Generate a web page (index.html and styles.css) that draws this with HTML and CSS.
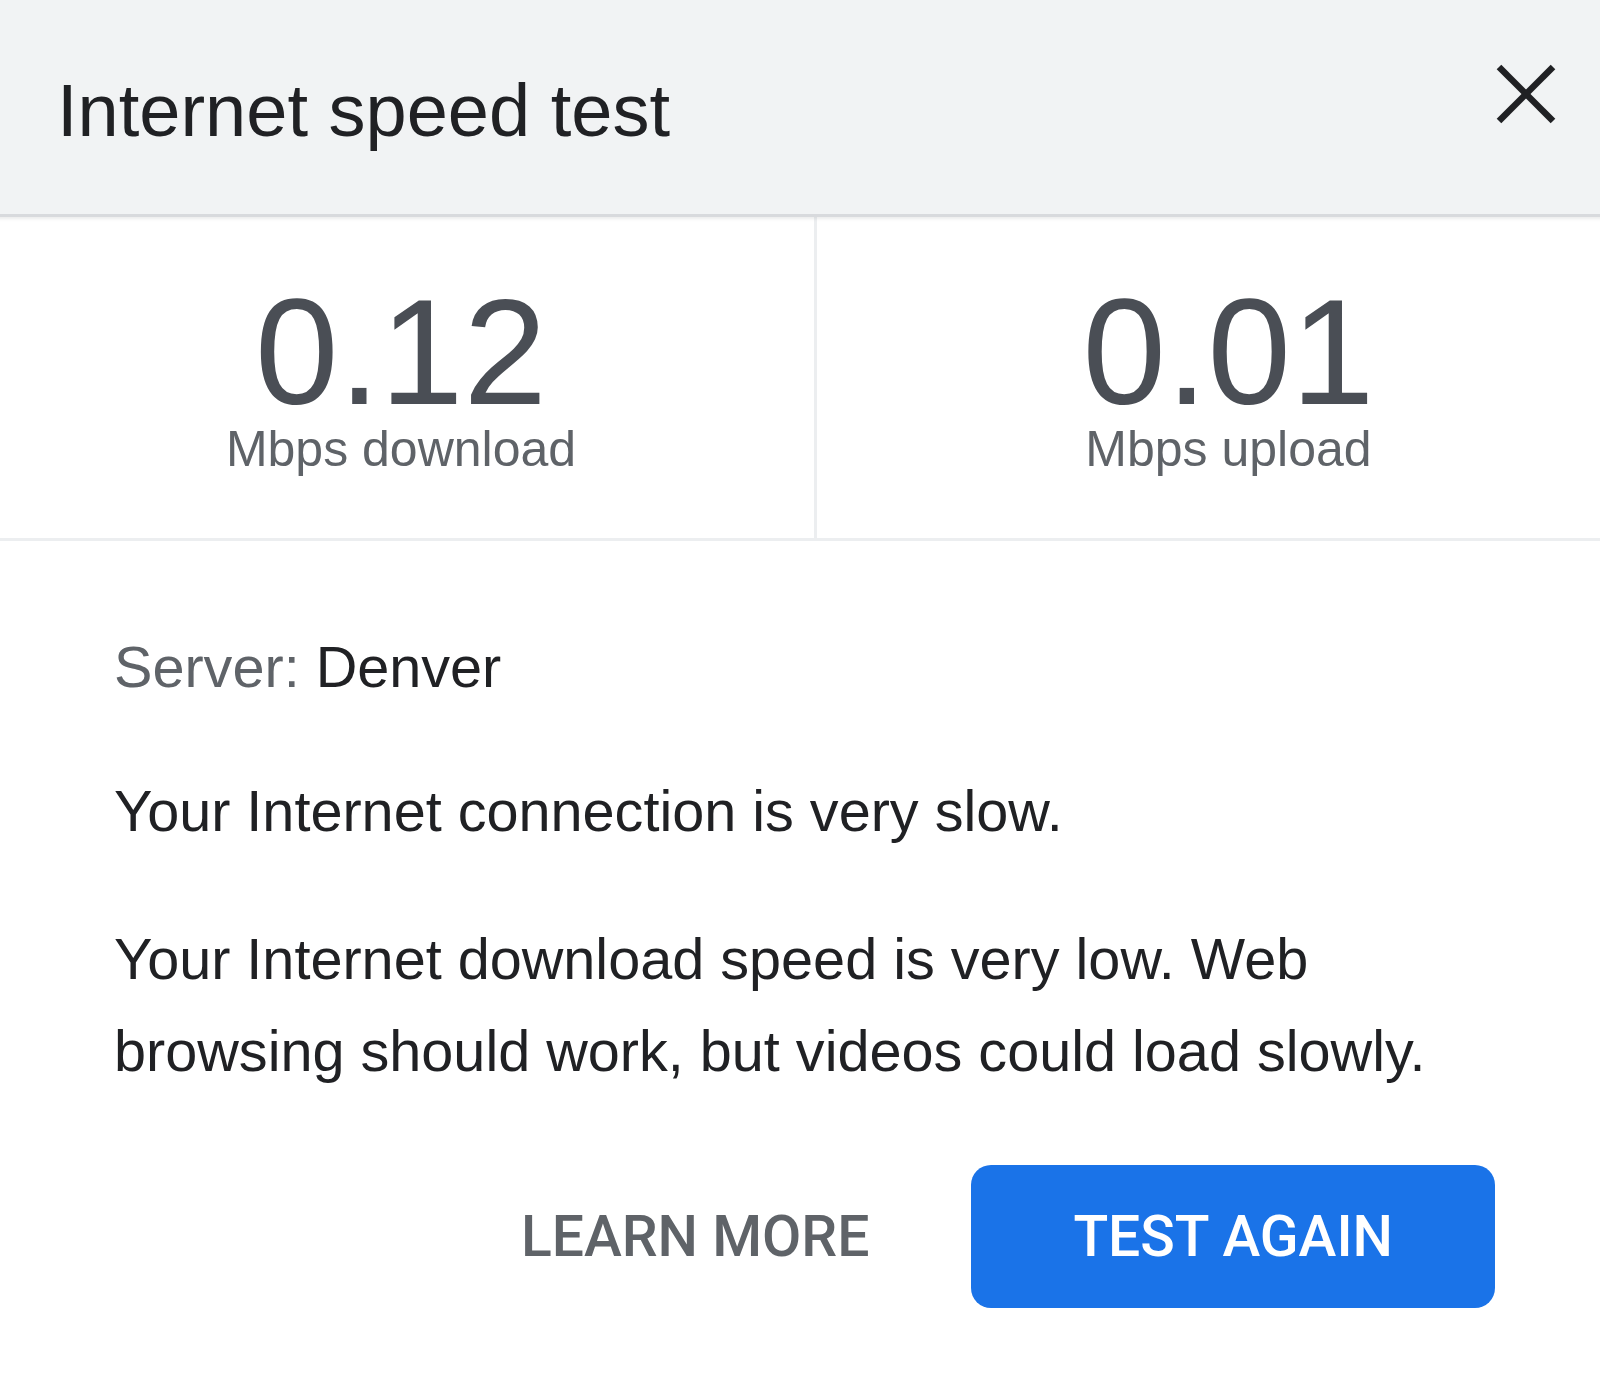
FILE: index.html
```html
<!DOCTYPE html>
<html lang="en">
<head>
<meta charset="utf-8">
<title>Internet speed test</title>
<link rel="stylesheet" href="styles.css">
</head>
<body>
<div class="viewport">
  <div class="dialog">
    <header class="dialog-header">
      <h1 class="dialog-title">Internet speed test</h1>
      <button class="close-btn" aria-label="Close">
        <svg width="64" height="64" viewBox="0 0 64 64" aria-hidden="true">
          <line x1="5" y1="5" x2="59" y2="59" />
          <line x1="59" y1="5" x2="5" y2="59" />
        </svg>
      </button>
    </header>
    <section class="stats">
      <div class="stat">
        <div class="stat-value">0.12</div>
        <div class="stat-label">Mbps download</div>
      </div>
      <div class="stat stat-upload">
        <div class="stat-value">0.01</div>
        <div class="stat-label">Mbps upload</div>
      </div>
    </section>
    <section class="details">
      <p class="server"><span class="server-key">Server:</span> Denver</p>
      <p class="para-first">Your Internet connection is very slow.</p>
      <p class="para-second">Your Internet download speed is very low. Web browsing should work, but videos could load slowly.</p>
    </section>
    <div class="actions">
      <button class="btn btn-text">LEARN MORE</button>
      <button class="btn btn-primary">TEST AGAIN</button>
    </div>
  </div>
</div>
</body>
</html>
```

FILE: styles.css
```css
html, body {
  margin: 0;
  padding: 0;
  background: #ffffff;
}

body {
  font-family: "Liberation Sans", Arial, sans-serif;
  color: #202124;
}

.viewport {
  width: 1600px;
  height: 1393px;
  overflow: hidden;
}

.dialog {
  width: 1652px;
  margin-left: -12px;
}

.dialog-header {
  box-sizing: border-box;
  height: 217px;
  background: #f1f3f4;
  border-bottom: 3px solid #d8dadd;
  box-shadow: 0 2px 3px rgba(60, 64, 67, 0.10);
  display: flex;
  justify-content: space-between;
  align-items: flex-start;
  padding: 62px 82px 0 69px;
  position: relative;
  z-index: 1;
}

.dialog-title {
  margin: 12px 0 0 0;
  font-size: 74px;
  line-height: 74px;
  font-weight: 400;
  color: #202124;
}

.close-btn {
  border: 0;
  background: transparent;
  padding: 0;
  margin: 0;
  width: 64px;
  height: 64px;
  display: block;
}

.close-btn svg {
  display: block;
  stroke: #202124;
  stroke-width: 6.5;
}

.stats {
  display: grid;
  grid-template-columns: 1fr 1fr;
  border-bottom: 3px solid #eceef0;
}

.stat {
  display: flex;
  flex-direction: column;
  align-items: center;
  padding: 62px 0 64px;
}

.stat-upload {
  border-left: 3px solid #eceef0;
}

.stat-value {
  font-size: 150px;
  line-height: 146px;
  color: #4a4e55;
}

.stat-label {
  font-size: 50px;
  line-height: 49px;
  color: #5f6368;
}

.details {
  padding: 80px 126px 0 126px;
  font-size: 57.6px;
  line-height: 92px;
}

.details p {
  margin: 0;
}

.details .server {
  margin-bottom: 52px;
}

.details .para-first {
  margin-bottom: 56px;
}

.server-key {
  color: #5f6368;
}

.actions {
  display: flex;
  justify-content: flex-end;
  padding: 68px 145px 0 0;
}

.btn {
  font-family: Roboto, "Liberation Sans", sans-serif;
  font-weight: 500;
  font-size: 57px;
  height: 143px;
  padding: 0 102px;
  border: 0;
  border-radius: 20px;
  letter-spacing: 0;
  background: transparent;
}

.btn-text {
  color: #5f6368;
}

.btn-primary {
  background: #1a73e8;
  color: #ffffff;
}
```
